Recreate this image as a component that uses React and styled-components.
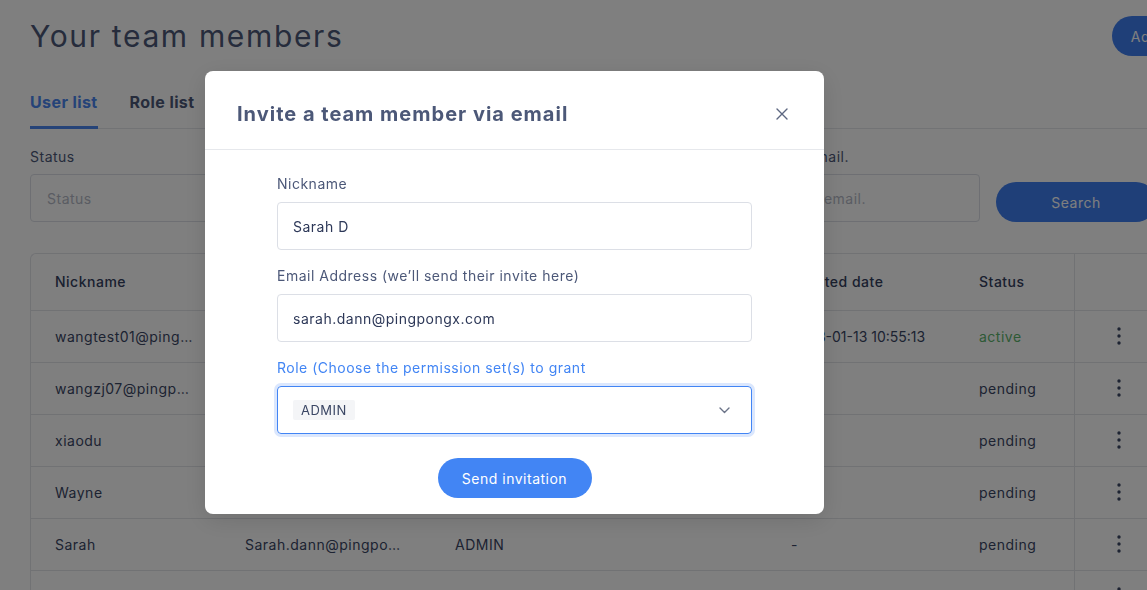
import React from 'react';
import styled, { createGlobalStyle } from 'styled-components';

const members = [
  { nickname: 'wangtest01@pingpongx.com', email: 'wangtest01@pingpongx.com', role: 'ADMIN', created: '2023-01-13 10:55:13', status: 'active' },
  { nickname: 'wangzj07@pingpongx.com', email: 'wangzj07@pingpongx.com', role: 'ADMIN', created: '-', status: 'pending' },
  { nickname: 'xiaodu', email: 'xiaodu@pingpongx.com', role: 'ADMIN', created: '-', status: 'pending' },
  { nickname: 'Wayne', email: 'wayne@pingpongx.com', role: 'ADMIN', created: '-', status: 'pending' },
  { nickname: 'Sarah', email: 'Sarah.dann@pingpongx.com', role: 'ADMIN', created: '-', status: 'pending' },
  { nickname: 'lily', email: 'lily@pingpongx.com', role: 'ADMIN', created: '-', status: 'pending' },
];

const MoreIcon = () => (
  <svg width="4" height="18" viewBox="0 0 4 18">
    <circle cx="2" cy="2" r="1.7" fill="currentColor" />
    <circle cx="2" cy="9" r="1.7" fill="currentColor" />
    <circle cx="2" cy="16" r="1.7" fill="currentColor" />
  </svg>
);

const CloseIcon = () => (
  <svg width="12" height="12" viewBox="0 0 12 12">
    <path d="M1 1l10 10M11 1L1 11" stroke="currentColor" strokeWidth="1.4" strokeLinecap="round" />
  </svg>
);

const ChevronIcon = () => (
  <svg width="11" height="7" viewBox="0 0 11 7">
    <path d="M1 1l4.5 4.5L10 1" stroke="currentColor" strokeWidth="1.4" fill="none" strokeLinecap="round" strokeLinejoin="round" />
  </svg>
);

const App = () => {
  return (
    <>
      <GlobalStyle />
      <Page>
        <TitleRow>
          <PageTitle>Your team members</PageTitle>
          <PrimaryButton $width="128px">Add member</PrimaryButton>
        </TitleRow>

        <Tabs>
          <Tab $active>User list</Tab>
          <Tab>Role list</Tab>
        </Tabs>

        <Filters>
          <Field>
            <FilterLabel>Status</FilterLabel>
            <FilterInput placeholder="Status" />
          </Field>
          <Field>
            <FilterLabel>Role</FilterLabel>
            <FilterInput placeholder="Role" />
          </Field>
          <Field>
            <FilterLabel>Enter nickname or email.</FilterLabel>
            <FilterInput placeholder="Enter nickname or email." />
          </Field>
          <PrimaryButton $width="160px">Search</PrimaryButton>
        </Filters>

        <TableWrap>
          <Table>
            <colgroup>
              <col style={{ width: 190 }} />
              <col style={{ width: 210 }} />
              <col style={{ width: 336 }} />
              <col style={{ width: 188 }} />
              <col style={{ width: 119 }} />
              <col style={{ width: 167 }} />
            </colgroup>
            <thead>
              <tr>
                <Th>Nickname</Th>
                <Th>Email</Th>
                <Th>Role</Th>
                <Th>Created date</Th>
                <Th>Status</Th>
                <Th $action />
              </tr>
            </thead>
            <tbody>
              {members.map((m, idx) => (
                <tr key={idx}>
                  <Td>{m.nickname}</Td>
                  <Td>{m.email}</Td>
                  <Td>{m.role}</Td>
                  <Td $date>{m.created}</Td>
                  <Td $status={m.status}>{m.status}</Td>
                  <Td $action>
                    <MoreIcon />
                  </Td>
                </tr>
              ))}
            </tbody>
          </Table>
        </TableWrap>
      </Page>

      <Overlay />

      <Modal>
        <ModalHeader>
          <ModalTitle>Invite a team member via email</ModalTitle>
          <CloseButton>
            <CloseIcon />
          </CloseButton>
        </ModalHeader>
        <ModalBody>
          <Form>
            <FormGroup>
              <FormLabel>Nickname</FormLabel>
              <TextInput defaultValue="Sarah D" />
            </FormGroup>
            <FormGroup>
              <FormLabel>Email Address (we’ll send their invite here)</FormLabel>
              <TextInput defaultValue="sarah.dann@pingpongx.com" />
            </FormGroup>
            <FormGroup>
              <FormLabel $focused>Role (Choose the permission set(s) to grant</FormLabel>
              <SelectBox>
                <Tag>ADMIN</Tag>
                <SelectArrow>
                  <ChevronIcon />
                </SelectArrow>
              </SelectBox>
            </FormGroup>
          </Form>
          <SendButton>Send invitation</SendButton>
        </ModalBody>
      </Modal>
    </>
  );
};

const GlobalStyle = createGlobalStyle`
  * {
    box-sizing: border-box;
  }

  body {
    margin: 0;
    overflow: hidden;
    background: #fff;
    font-family: Inter, "Noto Sans", sans-serif;
    letter-spacing: 0.5px;
    color: #3a4664;
  }

  input, button {
    letter-spacing: inherit;
  }
`;

const Page = styled.div`
  width: 1270px;
  height: 590px;
  padding: 0 30px;
  overflow: hidden;
`;

const TitleRow = styled.div`
  display: flex;
  align-items: center;
  justify-content: space-between;
  padding-top: 16px;
`;

const PageTitle = styled.h1`
  margin: 0;
  font-size: 30px;
  line-height: 40px;
  font-weight: 400;
  letter-spacing: 1.65px;
  color: #4c5878;
`;

const PrimaryButton = styled.button`
  width: ${(p) => p.$width};
  height: 40px;
  border: none;
  border-radius: 20px;
  background: #3f7ef0;
  color: #fff;
  font-family: inherit;
  font-size: 14px;
  flex-shrink: 0;
`;

const Tabs = styled.div`
  display: flex;
  gap: 32px;
  margin-top: 36px;
  border-bottom: 1px solid #e4e6eb;
`;

const Tab = styled.div`
  padding-bottom: 14px;
  font-size: 16px;
  line-height: 20px;
  font-weight: 700;
  letter-spacing: 0.4px;
  color: ${(p) => (p.$active ? '#4a86f0' : '#4c5878')};
  border-bottom: 3px solid ${(p) => (p.$active ? '#4a86f0' : 'transparent')};
  margin-bottom: -1px;
`;

const Filters = styled.div`
  display: flex;
  align-items: flex-end;
  gap: 16px;
  margin-top: 18px;
`;

const Field = styled.div`
  display: flex;
  flex-direction: column;
  width: 306px;
`;

const FilterLabel = styled.label`
  font-size: 14px;
  line-height: 20px;
  margin-bottom: 7px;
  color: #4c5878;
`;

const FilterInput = styled.input`
  height: 48px;
  padding: 0 16px;
  border: 1px solid #dcdfe6;
  border-radius: 4px;
  font-family: inherit;
  font-size: 14px;

  &::placeholder {
    color: #b4b9c6;
  }
`;

const TableWrap = styled.div`
  margin-top: 31px;
  border-top: 1px solid #e2e4e9;
  border-left: 1px solid #e2e4e9;
  border-top-left-radius: 6px;
  overflow: hidden;
`;

const Table = styled.table`
  width: 100%;
  table-layout: fixed;
  border-collapse: collapse;
  font-size: 14px;
`;

const Th = styled.th`
  height: 56px;
  padding: 0 24px;
  text-align: left;
  font-weight: 500;
  color: #34405e;
  border-bottom: 1px solid #e2e4e9;
  border-left: ${(p) => (p.$action ? '1px solid #e2e4e9' : 'none')};
`;

const statusColor = {
  active: '#5cb46c',
  pending: '#3a4664',
};

const Td = styled.td`
  height: 52px;
  padding: ${(p) => (p.$action ? '0 0 0 42px' : '0 24px')};
  white-space: nowrap;
  overflow: hidden;
  text-overflow: ellipsis;
  letter-spacing: ${(p) => (p.$date ? '0' : 'inherit')};
  color: ${(p) => statusColor[p.$status] || '#3a4664'};
  border-bottom: 1px solid #e2e4e9;
  border-left: ${(p) => (p.$action ? '1px solid #e2e4e9' : 'none')};

  svg {
    display: block;
  }
`;

const Overlay = styled.div`
  position: fixed;
  inset: 0;
  background: rgba(0, 0, 0, 0.5);
`;

const Modal = styled.div`
  position: fixed;
  left: 205px;
  top: 71px;
  width: 619px;
  background: #fff;
  border-radius: 8px;
  box-shadow: 0 6px 24px rgba(0, 0, 0, 0.12);
`;

const ModalHeader = styled.div`
  display: flex;
  align-items: center;
  justify-content: space-between;
  padding: 31px 36px 23px 32px;
  border-bottom: 1px solid #e6e8ec;
`;

const ModalTitle = styled.h2`
  margin: 0;
  font-size: 20px;
  line-height: 24px;
  font-weight: 700;
  letter-spacing: 1px;
  color: #4c5878;
`;

const CloseButton = styled.button`
  display: flex;
  padding: 0;
  border: none;
  background: none;
  color: #5d6781;
`;

const ModalBody = styled.div`
  display: flex;
  flex-direction: column;
  align-items: center;
  padding: 23px 0 16px;
`;

const Form = styled.div`
  display: flex;
  flex-direction: column;
  gap: 15px;
  width: 475px;
`;

const FormGroup = styled.div`
  display: flex;
  flex-direction: column;
`;

const FormLabel = styled.label`
  font-size: 14px;
  line-height: 22px;
  margin-bottom: 7px;
  color: ${(p) => (p.$focused ? '#4285f4' : '#4c5878')};
`;

const TextInput = styled.input`
  height: 48px;
  padding: 0 15px;
  border: 1px solid #dcdfe6;
  border-radius: 4px;
  font-family: inherit;
  font-size: 14px;
  color: #2d3858;
  outline: none;
`;

const SelectBox = styled.div`
  display: flex;
  align-items: center;
  justify-content: space-between;
  height: 48px;
  padding: 0 21px 0 15px;
  border: 1px solid #4285f4;
  border-radius: 4px;
  box-shadow: 0 0 0 3px #dbe7fd;
`;

const Tag = styled.span`
  padding: 0 8px;
  height: 20px;
  line-height: 20px;
  border-radius: 2px;
  background: #f4f5f7;
  font-size: 13px;
  color: #3a4664;
`;

const SelectArrow = styled.span`
  display: flex;
  color: #6b7388;
`;

const SendButton = styled.button`
  margin-top: 24px;
  width: 154px;
  height: 40px;
  border: none;
  border-radius: 20px;
  background: #4285f4;
  color: #fff;
  font-family: inherit;
  font-size: 14px;
`;

export default App;
